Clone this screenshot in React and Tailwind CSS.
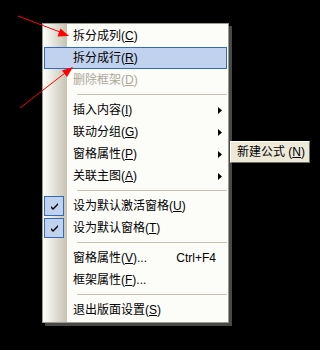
const items = [
  { label: "拆分成列", hot: "C" },
  { label: "拆分成行", hot: "R", active: true },
  { label: "删除框架", hot: "D", disabled: true },
  "sep",
  { label: "插入内容", hot: "I", sub: true },
  { label: "联动分组", hot: "G", sub: true },
  { label: "窗格属性", hot: "P", sub: true },
  { label: "关联主图", hot: "A", sub: true },
  "sep",
  { label: "设为默认激活窗格", hot: "U", checked: true },
  { label: "设为默认窗格", hot: "T", checked: true },
  "sep",
  { label: "窗格属性", hot: "V", dots: true, shortcut: "Ctrl+F4" },
  { label: "框架属性", hot: "F", dots: true },
  "sep",
  { label: "退出版面设置", hot: "S" },
];

const MenuRow = ({ item }) => {
  const rowClass = item.active
    ? "bg-[#c1d2ee] border-[#316ac5]"
    : "border-transparent";
  return (
    <div
      className={`relative flex items-center h-[22px] border pl-[28px] pr-[2px] ${rowClass} ${
        item.disabled ? "text-[#aca899]" : "text-black"
      }`}
    >
      {/* check mark box in the side strip */}
      {item.checked && (
        <div className="absolute left-[-1px] top-0 w-[20px] h-[20px] border border-[#316ac5] bg-[#c1d2ee] flex items-center justify-center">
          <svg width="7" height="7" viewBox="0 0 7 7">
            <path d="M0 3 L0 5 L2 7 L7 2 L7 0 L2 5 Z" fill="#000" />
          </svg>
        </div>
      )}
      <span className="flex-1 whitespace-nowrap">
        {item.label}(<span className="underline">{item.hot}</span>)
        {item.dots && "..."}
      </span>
      {item.shortcut && (
        <span className="mr-[8px] whitespace-nowrap">{item.shortcut}</span>
      )}
      {item.sub && (
        <svg width="4" height="7" viewBox="0 0 4 7" className="mr-[2px]">
          <path d="M0 0 L4 3.5 L0 7 Z" fill="#000" />
        </svg>
      )}
    </div>
  );
};

const App = () => {
  return (
    <div
      className="relative w-[320px] h-[350px] bg-black overflow-hidden text-[12px] leading-none flex items-start pl-[42px] pt-[23px]"
      style={{ fontFamily: "'Liberation Sans', 'Noto Sans CJK SC', sans-serif" }}
    >
      {/* context menu */}
      <div className="w-[187px] shrink-0 border border-[#9d9a8e] shadow-[3px_3px_0_#484848] bg-[linear-gradient(to_right,#fefefb_0px,#c6c3b3_24px,#fcfcf9_24px)] p-[1px]">
        {items.map((item, i) =>
          item === "sep" ? (
            <div key={i} className="h-[8px] pl-[33px] pt-[3px]">
              <div className="h-[1px] bg-[#c5c2b2]" />
            </div>
          ) : (
            <MenuRow key={i} item={item} />
          )
        )}
      </div>

      {/* submenu of 窗格属性 */}
      <div className="relative z-10 ml-[1px] mt-[118px] w-[80px] h-[22px] shrink-0 bg-[#ece9d8] border border-t-white border-l-white border-r-[#716f64] border-b-[#716f64] flex items-center pl-[6px] text-black whitespace-nowrap">
        新建公式 (<span className="underline">N</span>)
      </div>

      {/* red annotation arrows */}
      <svg
        className="absolute left-0 top-0 z-20"
        width="320"
        height="350"
        viewBox="0 0 320 350"
      >
        <line x1="18" y1="16" x2="60" y2="32" stroke="#ff0000" strokeWidth="1" />
        <polygon points="69,36 57.5,36.5 60.5,28.5" fill="#ff0000" />
        <line x1="20" y1="108" x2="65" y2="73" stroke="#ff0000" strokeWidth="1" />
        <polygon points="73,67 67,77 62,70.5" fill="#ff0000" />
      </svg>
    </div>
  );
};

export default App;
